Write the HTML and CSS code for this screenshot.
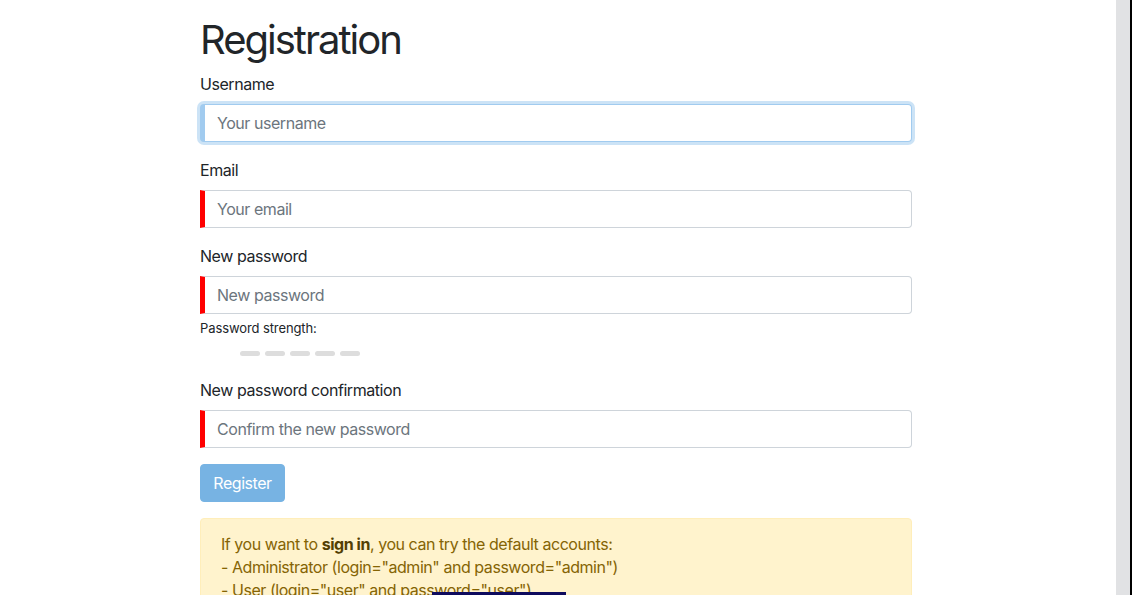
FILE: index.html
```html
<!DOCTYPE html>
<html>
<head>
<meta charset="utf-8">
<link rel="stylesheet" href="styles.css">
</head>
<body>
<div class="page">
  <main class="content">
    <div class="container">
      <h1 class="title">Registration</h1>
      <form class="form">
        <div class="group">
          <label class="label">Username</label>
          <input class="field focus" type="text" placeholder="Your username">
        </div>
        <div class="group">
          <label class="label">Email</label>
          <input class="field invalid" type="text" placeholder="Your email">
        </div>
        <div class="group pw">
          <label class="label">New password</label>
          <input class="field invalid" type="password" placeholder="New password">
          <div class="strength-label">Password strength:</div>
          <div class="strength">
            <span class="bar"></span><span class="bar"></span><span class="bar"></span><span class="bar"></span><span class="bar"></span>
          </div>
        </div>
        <div class="group">
          <label class="label">New password confirmation</label>
          <input class="field invalid" type="password" placeholder="Confirm the new password">
        </div>
        <button class="btn" type="button">Register</button>
      </form>
      <div class="alert">
        If you want to <b>sign in</b>, you can try the default accounts:<br>
        - Administrator (login="admin" and password="admin")<br>
        - User (login="user" and password="user")<br>
        - Guest (login="guest" and password="guest")
      </div>
    </div>
  </main>
  <div class="track"></div>
  <div class="edge"></div>
</div>
<div class="toast"></div>
</body>
</html>
```
FILE: styles.css
```css
html, body {
  margin: 0;
  padding: 0;
  height: 100%;
  overflow: hidden;
}
body {
  font-family: Inter, "Liberation Sans", sans-serif;
  color: #212529;
  background: #fff;
  font-size: 16px;
  line-height: 24px;
  letter-spacing: -0.45px;
}
.page {
  display: flex;
  height: 595px;
}
.content {
  flex: 1;
  overflow: hidden;
}
.track {
  width: 14px;
  background: #e1e2e4;
}
.edge {
  width: 2px;
  background: #000;
}
.container {
  width: 712px;
  margin-left: 200px;
  padding-top: 16px;
}
.title {
  font-size: 40px;
  font-weight: 400;
  line-height: 48px;
  letter-spacing: -2px;
  margin: 0 0 8px;
}
.form {
  margin: 0;
}
.group {
  margin-bottom: 16px;
  display: flex;
  flex-direction: column;
}
.label {
  margin-bottom: 8px;
  line-height: 24px;
}
.field {
  box-sizing: border-box;
  height: 38px;
  width: 100%;
  border: 1px solid #ced4da;
  border-radius: 4px;
  padding: 6px 12px;
  font-family: inherit;
  font-size: 16px;
  letter-spacing: -0.45px;
  color: #495057;
  background: #fff;
  outline: none;
}
.field::placeholder {
  color: #6c757d;
}
.invalid {
  border-left: 5px solid #ff0000;
  border-radius: 0 4px 4px 0;
}
.focus {
  border-color: #a1cbef;
  border-left: 5px solid #a1cbef;
  box-shadow: 0 0 0 3px rgba(52, 144, 220, 0.25);
}
.strength-label {
  font-size: 13px;
  line-height: 18px;
  letter-spacing: -0.1px;
  margin-top: 5px;
}
.strength {
  display: flex;
  gap: 5px;
  padding-left: 40px;
  margin-top: 14px;
  margin-bottom: 6px;
}
.bar {
  width: 20px;
  height: 5px;
  border-radius: 3px;
  background: #dddddd;
}
.btn {
  font-family: inherit;
  font-size: 16px;
  line-height: 24px;
  letter-spacing: -0.45px;
  color: #fff;
  background: #77b3e3;
  border: 1px solid #77b3e3;
  border-radius: 4px;
  padding: 6px 12px;
  height: 38px;
  width: 85px;
}
.alert {
  margin-top: 16px;
  background: #fff3cd;
  border: 1px solid #ffeeba;
  border-radius: 4px;
  color: #856404;
  padding: 14px 20px 12px;
  line-height: 23px;
}
.alert b {
  color: #533f03;
}
.toast {
  position: absolute;
  left: 432px;
  top: 592px;
  width: 134px;
  height: 20px;
  background: #0e0b5e;
}
```
